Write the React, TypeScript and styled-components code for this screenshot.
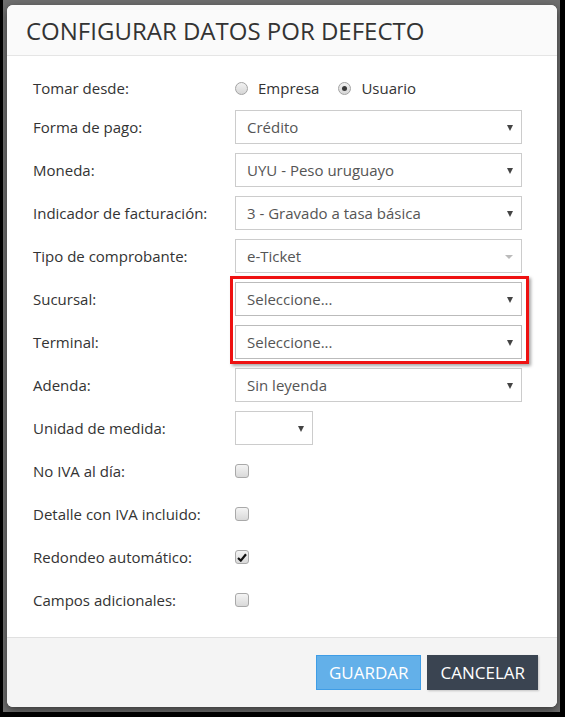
import React from 'react';
import styled, { createGlobalStyle } from 'styled-components';

const GlobalStyle = createGlobalStyle`
  html, body {
    margin: 0;
    padding: 0;
    background: #000;
    font-family: "Open Sans", "Liberation Sans", sans-serif;
  }
`;

const Screen = styled.div`
  width: 565px;
  height: 717px;
  background: #000;
  overflow: hidden;
`;

const Backdrop = styled.div`
  margin-left: 3px;
  width: 557px;
  height: 712px;
  box-sizing: border-box;
  padding: 5px 3px 5px 4px;
  background: #6e6e6e;
`;

const Modal = styled.div`
  position: relative;
  height: 100%;
  display: flex;
  flex-direction: column;
  background: #fff;
  border-radius: 6px;
  overflow: hidden;
  box-shadow: 0 3px 8px rgba(0, 0, 0, 0.5);
`;

const Header = styled.div`
  height: 50px;
  display: flex;
  align-items: center;
  padding: 0 19px;
  background: #fafafa;
  border-bottom: 1px solid #e5e5e5;
`;

const Title = styled.h4`
  margin: 0;
  font-size: 24px;
  font-weight: 400;
  color: #333;
`;

const Body = styled.div`
  position: relative;
  flex: 1;
  padding: 19px 35px 19px 26px;
  display: grid;
  grid-template-columns: 202px 1fr;
  grid-auto-rows: 34px;
  grid-template-rows: 26px;
  row-gap: 9px;
  align-items: center;
`;

const Label = styled.label`
  font-size: 15px;
  color: #333;
`;

const RadioGroup = styled.div`
  display: flex;
  align-items: center;
  gap: 19px;
`;

const RadioOption = styled.span`
  display: flex;
  align-items: center;
  gap: 10px;
  font-size: 15px;
  color: #333;
`;

const RadioDot = styled.span<{ $checked?: boolean }>`
  position: relative;
  width: 13px;
  height: 13px;
  box-sizing: border-box;
  border-radius: 50%;
  border: 1px solid #a3a3a3;
  background: linear-gradient(#f2f2f2, #d6d6d6);

  &::after {
    content: '';
    display: ${(p) => (p.$checked ? 'block' : 'none')};
    position: absolute;
    left: 3px;
    top: 3px;
    width: 5px;
    height: 5px;
    border-radius: 50%;
    background: #3a3a3a;
  }
`;

const Select = styled.div<{ $width?: number; $strong?: boolean }>`
  height: 34px;
  width: ${(p) => (p.$width ? `${p.$width}px` : '100%')};
  box-sizing: border-box;
  border: 1px solid ${(p) => (p.$strong ? '#bbb' : '#ccc')};
  background: #fff;
  display: flex;
  align-items: center;
  justify-content: space-between;
  padding: 0 8px 0 11px;
  font-size: 15px;
  color: #555;
`;

const Caret = styled.span<{ $disabled?: boolean }>`
  width: 0;
  height: 0;
  border-left: ${(p) => (p.$disabled ? 4.5 : 3.5)}px solid transparent;
  border-right: ${(p) => (p.$disabled ? 4.5 : 3.5)}px solid transparent;
  border-top: ${(p) => (p.$disabled ? 4 : 6)}px solid
    ${(p) => (p.$disabled ? '#bbb' : '#444')};
  margin-top: 1px;
`;

const Check = styled.span`
  display: flex;
  align-items: center;
  justify-content: center;
  width: 14px;
  height: 14px;
  box-sizing: border-box;
  border: 1px solid #a9a9a9;
  border-radius: 3px;
  background: linear-gradient(#f4f4f4, #d9d9d9);
`;

const Highlight = styled.div`
  position: absolute;
  left: 223px;
  top: 220px;
  width: 299px;
  height: 88px;
  box-sizing: border-box;
  border: 3px solid #ee1111;
  box-shadow: 2px 2px 3px rgba(0, 0, 0, 0.35);
  pointer-events: none;
`;

const Footer = styled.div`
  height: 70px;
  display: flex;
  justify-content: flex-end;
  align-items: flex-start;
  gap: 6px;
  padding: 17px 19px 0;
  box-sizing: border-box;
  background: #f4f4f4;
  border-top: 1px solid #e0e0e0;
`;

const Button = styled.button<{ $variant: 'primary' | 'dark' }>`
  height: 35px;
  padding: 0 12px;
  font-family: "Open Sans", "Liberation Sans", sans-serif;
  font-size: 17px;
  color: #fff;
  border-radius: 0;
  border: 1px solid ${(p) => (p.$variant === 'primary' ? '#3f9de6' : '#3a4451')};
  background: ${(p) => (p.$variant === 'primary' ? '#63b0e9' : '#3a4451')};
  box-shadow: ${(p) => (p.$variant === 'dark' ? '1px 1px 2px rgba(0,0,0,0.2)' : 'none')};
`;

function Tick() {
  return (
    <svg width="10" height="9" viewBox="0 0 10 9">
      <path d="M1 5 L3.8 7.6 L9 1.2" fill="none" stroke="#111" strokeWidth="2.2" />
    </svg>
  );
}

const selects: { label: string; value: string; disabled?: boolean; marked?: boolean }[] = [
  { label: 'Forma de pago:', value: 'Crédito' },
  { label: 'Moneda:', value: 'UYU - Peso uruguayo' },
  { label: 'Indicador de facturación:', value: '3 - Gravado a tasa básica' },
  { label: 'Tipo de comprobante:', value: 'e-Ticket', disabled: true },
  { label: 'Sucursal:', value: 'Seleccione...', marked: true },
  { label: 'Terminal:', value: 'Seleccione...', marked: true },
  { label: 'Adenda:', value: 'Sin leyenda' },
];

const checks: { label: string; checked?: boolean }[] = [
  { label: 'No IVA al día:' },
  { label: 'Detalle con IVA incluido:' },
  { label: 'Redondeo automático:', checked: true },
  { label: 'Campos adicionales:' },
];

export default function App() {
  return (
    <Screen>
      <GlobalStyle />
      <Backdrop>
        <Modal>
          <Header>
            <Title>CONFIGURAR DATOS POR DEFECTO</Title>
          </Header>
          <Body>
            <Label>Tomar desde:</Label>
            <RadioGroup>
              <RadioOption>
                <RadioDot />
                Empresa
              </RadioOption>
              <RadioOption>
                <RadioDot $checked />
                Usuario
              </RadioOption>
            </RadioGroup>

            {selects.map((s) => (
              <React.Fragment key={s.label}>
                <Label>{s.label}</Label>
                <Select $strong={s.marked}>
                  <span>{s.value}</span>
                  <Caret $disabled={s.disabled} />
                </Select>
              </React.Fragment>
            ))}

            <Label>Unidad de medida:</Label>
            <Select $width={78}>
              <span />
              <Caret />
            </Select>

            {checks.map((c) => (
              <React.Fragment key={c.label}>
                <Label>{c.label}</Label>
                <Check>{c.checked && <Tick />}</Check>
              </React.Fragment>
            ))}

            <Highlight />
          </Body>
          <Footer>
            <Button $variant="primary">GUARDAR</Button>
            <Button $variant="dark">CANCELAR</Button>
          </Footer>
        </Modal>
      </Backdrop>
    </Screen>
  );
}
